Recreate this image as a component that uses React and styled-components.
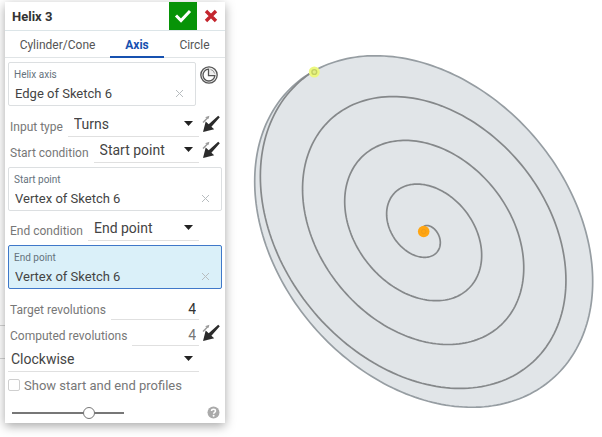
import React, { useId, useState } from "react";
import styled, { createGlobalStyle } from "styled-components";

const GlobalStyle = createGlobalStyle`
  * { box-sizing: border-box; }
  body { margin: 0; background: #fff; font-family: Roboto, "Liberation Sans", sans-serif; color: #444; }
  button, input, select { font: inherit; color: inherit; }
  button { border: 0; padding: 0; background: none; cursor: pointer; }
`;

const Workspace = styled.main`
  display: flex;
  align-items: flex-start;
  min-height: 100vh;
  overflow: hidden;
  background: linear-gradient(#d4d4d4, #d4d4d4) 0 325px / 5px 1px no-repeat,
    linear-gradient(#d4d4d4, #d4d4d4) 0 358px / 5px 1px no-repeat, #fff;
`;

const Panel = styled.form`
  flex: 0 0 220px;
  min-width: 0;
  margin: 2px 0 14px 5px;
  background: #fff;
  box-shadow: 0 3px 10px rgba(0, 0, 0, 0.35);
`;

const Header = styled.header`
  display: flex;
  align-items: stretch;
  height: 29px;
  border-bottom: 1px solid #dce5e8;
`;

const Title = styled.h1`
  flex: 1;
  margin: 0;
  padding-left: 7px;
  font-size: 13px;
  font-weight: 700;
  line-height: 30px;
  color: #333;
`;

const HeaderButton = styled.button`
  display: grid;
  place-items: center;
  width: 28px;
  background: ${(p) => (p.$accept ? "#079307" : "transparent")};
`;

const Tabs = styled.div`
  display: flex;
  height: 27px;
  border-bottom: 1px solid #e0e4e6;
`;

const Tab = styled.button`
  flex: ${(p) => p.$grow} 1 0;
  min-width: 0;
  height: 27px;
  padding-top: 2px;
  font-size: 12px;
  font-weight: ${(p) => (p.$active ? 700 : 400)};
  color: ${(p) => (p.$active ? "#1651b0" : "#555")};
  border-bottom: 2px solid ${(p) => (p.$active ? "#1651b0" : "transparent")};
`;

const Body = styled.div`
  display: flex;
  flex-direction: column;
  gap: 4px;
  padding: 4px 3px 0;
`;

const Line = styled.div`
  display: flex;
  align-items: flex-start;
`;

const FieldBox = styled.div`
  flex: 1;
  min-width: 0;
  height: 44px;
  padding: 5px 11px 0 5px;
  border: 1px solid ${(p) => (p.$active ? "#3f78c9" : "#dcdfe1")};
  border-radius: 2px;
  background: ${(p) => (p.$active ? "#daf0f9" : "#fff")};
`;

const FieldLabel = styled.label`
  display: block;
  font-size: 10px;
  line-height: 14px;
  color: #65727c;
`;

const FieldValue = styled.div`
  display: flex;
  align-items: center;
  justify-content: space-between;
  height: 22px;
`;

const ValueInput = styled.input`
  flex: 1;
  width: 0;
  min-width: 0;
  height: 20px;
  padding: 0 1px;
  border: 0;
  outline: 0;
  background: transparent;
  font-size: 13px;
`;

const IconButton = styled.button`
  display: grid;
  place-items: center;
  flex: none;
`;

const HistoryButton = styled(IconButton)`
  width: 26px;
  height: 26px;
`;

const Rows = styled.div`
  display: flex;
  flex-direction: column;
  margin-top: 1px;
`;

const Row = styled.div`
  display: flex;
  align-items: stretch;
  height: 26px;
`;

const RowLabel = styled.label`
  flex: none;
  padding: 6px 5px 0 2px;
  font-size: 12px;
  line-height: 20px;
  color: #777;
`;

const Control = styled.div`
  position: relative;
  display: flex;
  flex: 1;
  min-width: 0;
  border-bottom: 1px solid #e0e0e0;
`;

const Select = styled.select`
  appearance: none;
  width: 100%;
  height: 25px;
  padding: 0 20px 0 ${(p) => (p.$flush ? "3px" : "6px")};
  border: 0;
  outline: 0;
  background: transparent;
  font-size: 14px;
`;

const Caret = styled.svg`
  position: absolute;
  right: 6px;
  top: 10px;
  pointer-events: none;
`;

const NumberInput = styled.input`
  width: 100%;
  height: 25px;
  padding: 4px 3px 0 0;
  border: 0;
  outline: 0;
  background: transparent;
  text-align: right;
  font-size: 14px;
  color: ${(p) => (p.readOnly ? "#777" : "#333")};
`;

const RowEnd = styled.div`
  display: grid;
  place-items: center;
  flex: 0 0 23px;
`;

const CheckRow = styled.label`
  display: flex;
  align-items: center;
  gap: 4px;
  height: 26px;
  font-size: 13px;
  color: #777;
`;

const Checkbox = styled.input`
  appearance: none;
  width: 12px;
  height: 12px;
  margin: 0;
  border: 1px solid #cfcfcf;
  border-radius: 2px;
  background: #fff;
  &:checked { background: #1651b0; }
`;

const Footer = styled.footer`
  display: flex;
  align-items: center;
  justify-content: space-between;
  height: 25px;
  padding: 4px 5px 0 7px;
`;

const Slider = styled.input`
  appearance: none;
  width: 112px;
  height: 14px;
  margin: 0;
  background: linear-gradient(#777, #777) center / 100% 2px no-repeat;
  &::-webkit-slider-thumb {
    appearance: none;
    width: 12px;
    height: 12px;
    border: 1px solid #777;
    border-radius: 50%;
    background: #fff;
  }
`;

const Stage = styled.section`
  flex: 1;
  min-width: 0;
`;

const Drawing = styled.svg`
  display: block;
  width: 100%;
  height: auto;
`;

function ClearIcon() {
  return (
    <svg width="9" height="9" viewBox="0 0 9 9" stroke="#b7bcbf" strokeWidth="1">
      <path d="M1 1 8 8M8 1 1 8" />
    </svg>
  );
}

function ClockIcon() {
  return (
    <svg width="18" height="18" viewBox="0 0 18 18" fill="none" stroke="#555">
      <circle cx="9" cy="9" r="8.2" fill="#eee" strokeWidth="1.3" />
      <path d="M8.5 3.2A5.9 5.9 0 1 0 14.8 9.6H8.5Z" fill="#fff" strokeWidth="1.3" />
      <path d="M10.5 3.4A6 6 0 0 1 14.7 7.6" stroke="#999" strokeWidth="1" />
    </svg>
  );
}

function FlipIcon() {
  return (
    <svg width="18" height="18" viewBox="0 0 18 18">
      <path d="M1 7.5 6 2.5" stroke="#999" strokeWidth="1.4" />
      <path d="M3 2.3 7.4.8 6.6 3.8Z" fill="#999" />
      <path d="M1 17 3.7 6.6 6.7 9.3 16.2.8 17.8 2.3 9.4 11.8 12.2 14.3Z" fill="#2b2b2b" />
    </svg>
  );
}

function SelectionField({ label, value, active }) {
  const id = useId();
  return (
    <FieldBox $active={active}>
      <FieldLabel htmlFor={id}>{label}</FieldLabel>
      <FieldValue>
        <ValueInput id={id} value={value} readOnly />
        <IconButton type="button" aria-label={`Clear ${label}`}><ClearIcon /></IconButton>
      </FieldValue>
    </FieldBox>
  );
}

function SelectRow({ label, value, flip }) {
  const id = useId();
  return (
    <Row>
      {label && <RowLabel htmlFor={id}>{label}</RowLabel>}
      <Control>
        <Select id={id} $flush={!label} aria-label={label ? undefined : "Direction"} defaultValue={value}>
          <option>{value}</option>
        </Select>
        <Caret width="9" height="5" viewBox="0 0 9 5"><path d="M0 0h9L4.5 5Z" fill="#222" /></Caret>
      </Control>
      <RowEnd>
        {flip && <IconButton type="button" aria-label="Flip direction"><FlipIcon /></IconButton>}
      </RowEnd>
    </Row>
  );
}

function NumberRow({ label, value, readOnly, flip }) {
  const id = useId();
  return (
    <Row>
      <RowLabel htmlFor={id}>{label}</RowLabel>
      <Control><NumberInput id={id} defaultValue={value} readOnly={readOnly} /></Control>
      <RowEnd>
        {flip && <IconButton type="button" aria-label="Flip direction"><FlipIcon /></IconButton>}
      </RowEnd>
    </Row>
  );
}

const CENTER = [423.7, 231.5];

function ellipsePoint(radius, angle) {
  const x = CENTER[0] + radius * 169 * Math.cos(angle);
  const y = CENTER[1] + radius * (50 * Math.cos(angle) + 168.5 * Math.sin(angle));
  return `${x.toFixed(2)} ${y.toFixed(2)}`;
}

function curve(steps, radiusAt, angleAt) {
  return "M" + Array.from({ length: steps + 1 }, (_, i) =>
    ellipsePoint(radiusAt(i / steps), angleAt(i / steps))).join("L");
}

const OUTLINE = curve(240, () => 1, (s) => s * 2 * Math.PI) + "Z";
const END_ANGLE = (229.3 * Math.PI) / 180;
const SPIRAL = curve(800, (s) => s, (s) => END_ANGLE + s * 8 * Math.PI);

function SpiralDrawing() {
  return (
    <Drawing viewBox="225 0 377 437" role="img" aria-label="Spiral helix on a disc">
      <path d={OUTLINE} fill="#e1e5e8" stroke="#969da2" strokeWidth="1.7" />
      <path d={SPIRAL} fill="none" stroke="#85888a" strokeWidth="1.7" />
      <circle cx="314.3" cy="72" r="5.5" fill="#ecf87f" />
      <circle cx="314.3" cy="72" r="2.4" fill="#e3ee88" stroke="#c3d062" strokeWidth="1.4" />
      <circle cx="423.7" cy="231.5" r="5.8" fill="#ffa512" />
      <circle cx="423.7" cy="231.5" r="2.2" fill="none" stroke="#f19d18" strokeWidth="1" />
    </Drawing>
  );
}

const TABS = [["Cylinder/Cone", 105], ["Axis", 54], ["Circle", 61]];

export default function App() {
  const [tab, setTab] = useState("Axis");
  return (
    <>
      <GlobalStyle />
      <Workspace>
        <Panel onSubmit={(e) => e.preventDefault()}>
          <Header>
            <Title>Helix 3</Title>
            <HeaderButton type="submit" $accept aria-label="Accept">
              <svg width="18" height="14" viewBox="0 0 18 14" fill="none" stroke="#fff" strokeWidth="3">
                <path d="M2 6.5 7 11.5 16 2" />
              </svg>
            </HeaderButton>
            <HeaderButton type="button" aria-label="Cancel">
              <svg width="14" height="14" viewBox="0 0 14 14" stroke="#c4262e" strokeWidth="3.4">
                <path d="M2 2 12 12M12 2 2 12" />
              </svg>
            </HeaderButton>
          </Header>
          <Tabs role="tablist">
            {TABS.map(([name, grow]) => (
              <Tab key={name} type="button" role="tab" $grow={grow} $active={tab === name}
                aria-selected={tab === name} onClick={() => setTab(name)}>{name}</Tab>
            ))}
          </Tabs>
          <Body>
            <Line>
              <SelectionField label="Helix axis" value="Edge of Sketch 6" />
              <HistoryButton type="button" aria-label="Selection history"><ClockIcon /></HistoryButton>
            </Line>
            <Rows>
              <SelectRow label="Input type" value="Turns" flip />
              <SelectRow label="Start condition" value="Start point" flip />
            </Rows>
            <Line><SelectionField label="Start point" value="Vertex of Sketch 6" /></Line>
            <SelectRow label="End condition" value="End point" />
            <Line><SelectionField label="End point" value="Vertex of Sketch 6" active /></Line>
            <Rows>
              <NumberRow label="Target revolutions" value="4" />
              <NumberRow label="Computed revolutions" value="4" readOnly flip />
              <SelectRow value="Clockwise" />
              <CheckRow><Checkbox type="checkbox" />Show start and end profiles</CheckRow>
            </Rows>
          </Body>
          <Footer>
            <Slider type="range" min="0" max="100" defaultValue="71" aria-label="Preview opacity" />
            <IconButton type="button" aria-label="Help">
              <svg width="13" height="13" viewBox="0 0 13 13" fill="none">
                <circle cx="6.5" cy="6.5" r="6" fill="#aaa" />
                <path d="M4.5 5C4.5 2.7 8.5 2.7 8.5 5 8.5 6.3 6.6 6.3 6.6 7.8" stroke="#fff" strokeWidth="1.5" />
                <circle cx="6.6" cy="9.8" r="1" fill="#fff" />
              </svg>
            </IconButton>
          </Footer>
        </Panel>
        <Stage><SpiralDrawing /></Stage>
      </Workspace>
    </>
  );
}
